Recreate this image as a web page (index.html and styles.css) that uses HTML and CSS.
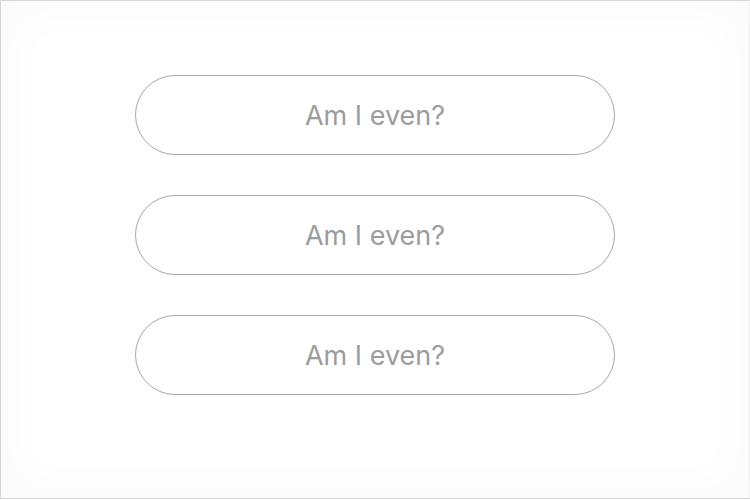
FILE: index.html
```
<!DOCTYPE html>
<html>
<head>
<meta charset="utf-8">
<link rel="stylesheet" href="styles.css">
</head>
<body>
<div class="frame">
  <div class="list">
    <button class="pill">Am I even?</button>
    <button class="pill">Am I even?</button>
    <button class="pill">Am I even?</button>
  </div>
</div>
</body>
</html>
```
FILE: styles.css
```
html, body {
  margin: 0;
  padding: 0;
  background: #ffffff;
}
.frame {
  box-sizing: border-box;
  width: 750px;
  height: 499px;
  border: 1px solid #d6d6d6;
  border-right-color: #f0f0f0;
  box-shadow: inset 0 0 40px 14px rgba(0, 0, 0, 0.018);
  display: flex;
  flex-direction: column;
  align-items: center;
  padding-top: 74px;
}
.list {
  display: flex;
  flex-direction: column;
  gap: 40px;
}
.pill {
  box-sizing: border-box;
  width: 480px;
  height: 80px;
  border: 1px solid #a8a8a8;
  border-radius: 40px;
  background: #ffffff;
  font-family: Inter, "Liberation Sans", sans-serif;
  font-size: 27px;
  color: #9c9c9c;
  padding: 0;
  cursor: pointer;
}
```
